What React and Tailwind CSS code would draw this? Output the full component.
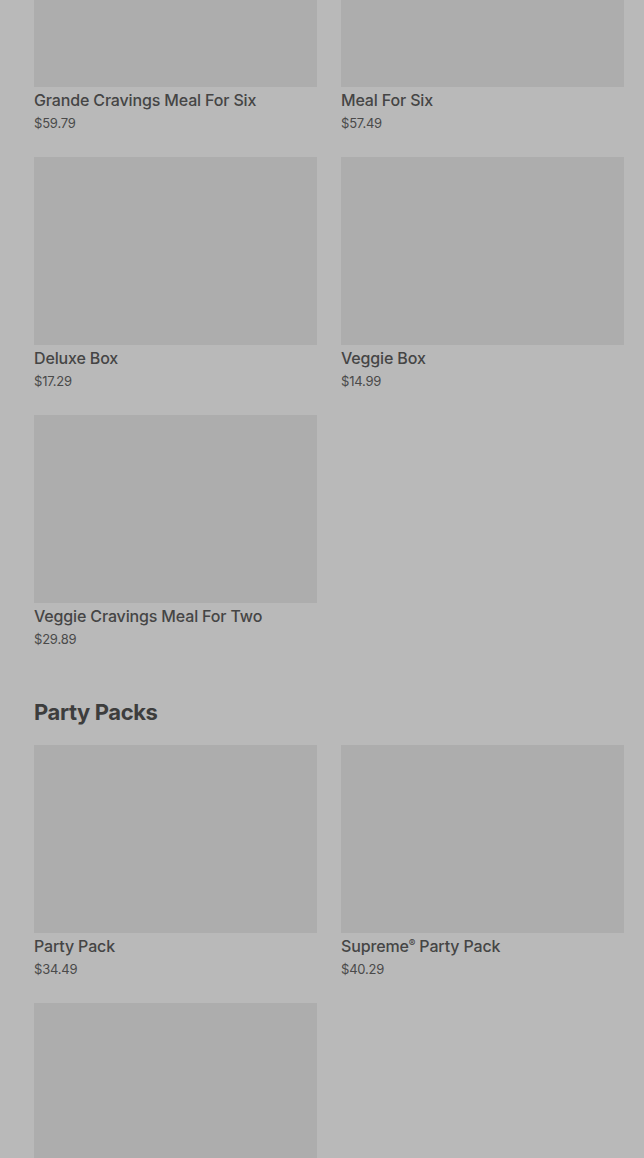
import React from "react";

const font = { fontFamily: "Inter, Roboto, 'Liberation Sans', sans-serif" };

function Card({ name, price }) {
  return (
    <div className="flex flex-col">
      <div className="h-[188px] w-full bg-[#adadad]" />
      <div className="mt-[2px] text-[16px] leading-[22px] font-medium text-[#454545] tracking-[-0.15px]">{name}</div>
      <div className="mt-[2px] text-[13px] leading-[20px] text-[#4a4a4a] tracking-[-0.2px]">{price}</div>
    </div>
  );
}

export default function App() {
  const boxes = [
    ["Grande Cravings Meal For Six", "$59.79"],
    ["Meal For Six", "$57.49"],
    ["Deluxe Box", "$17.29"],
    ["Veggie Box", "$14.99"],
    ["Veggie Cravings Meal For Two", "$29.89"],
  ];
  const party = [
    ["Party Pack", "$34.49"],
    [
      <>
        Supreme<span className="relative -top-[5px] text-[10px] leading-none">®</span> Party Pack
      </>,
      "$40.29",
    ],
    ["", ""],
  ];
  return (
    <div className="w-[644px] h-[1158px] overflow-hidden bg-[#b9b9b9]" style={font}>
      <div className="-mt-[101px] pl-[34px] pr-[20px]">
        <div className="grid grid-cols-[283px_283px] gap-x-[24px] gap-y-[24px]">
          {boxes.map(([n, p]) => (
            <Card key={n} name={n} price={p} />
          ))}
        </div>
        <h2 className="mt-[49px] mb-[19px] text-[22px] leading-[28px] font-bold text-[#3d3d3d] tracking-[-0.4px]">Party Packs</h2>
        <div className="grid grid-cols-[283px_283px] gap-x-[24px] gap-y-[24px]">
          {party.map(([n, p], i) => (
            <Card key={i} name={n} price={p} />
          ))}
        </div>
      </div>
    </div>
  );
}
